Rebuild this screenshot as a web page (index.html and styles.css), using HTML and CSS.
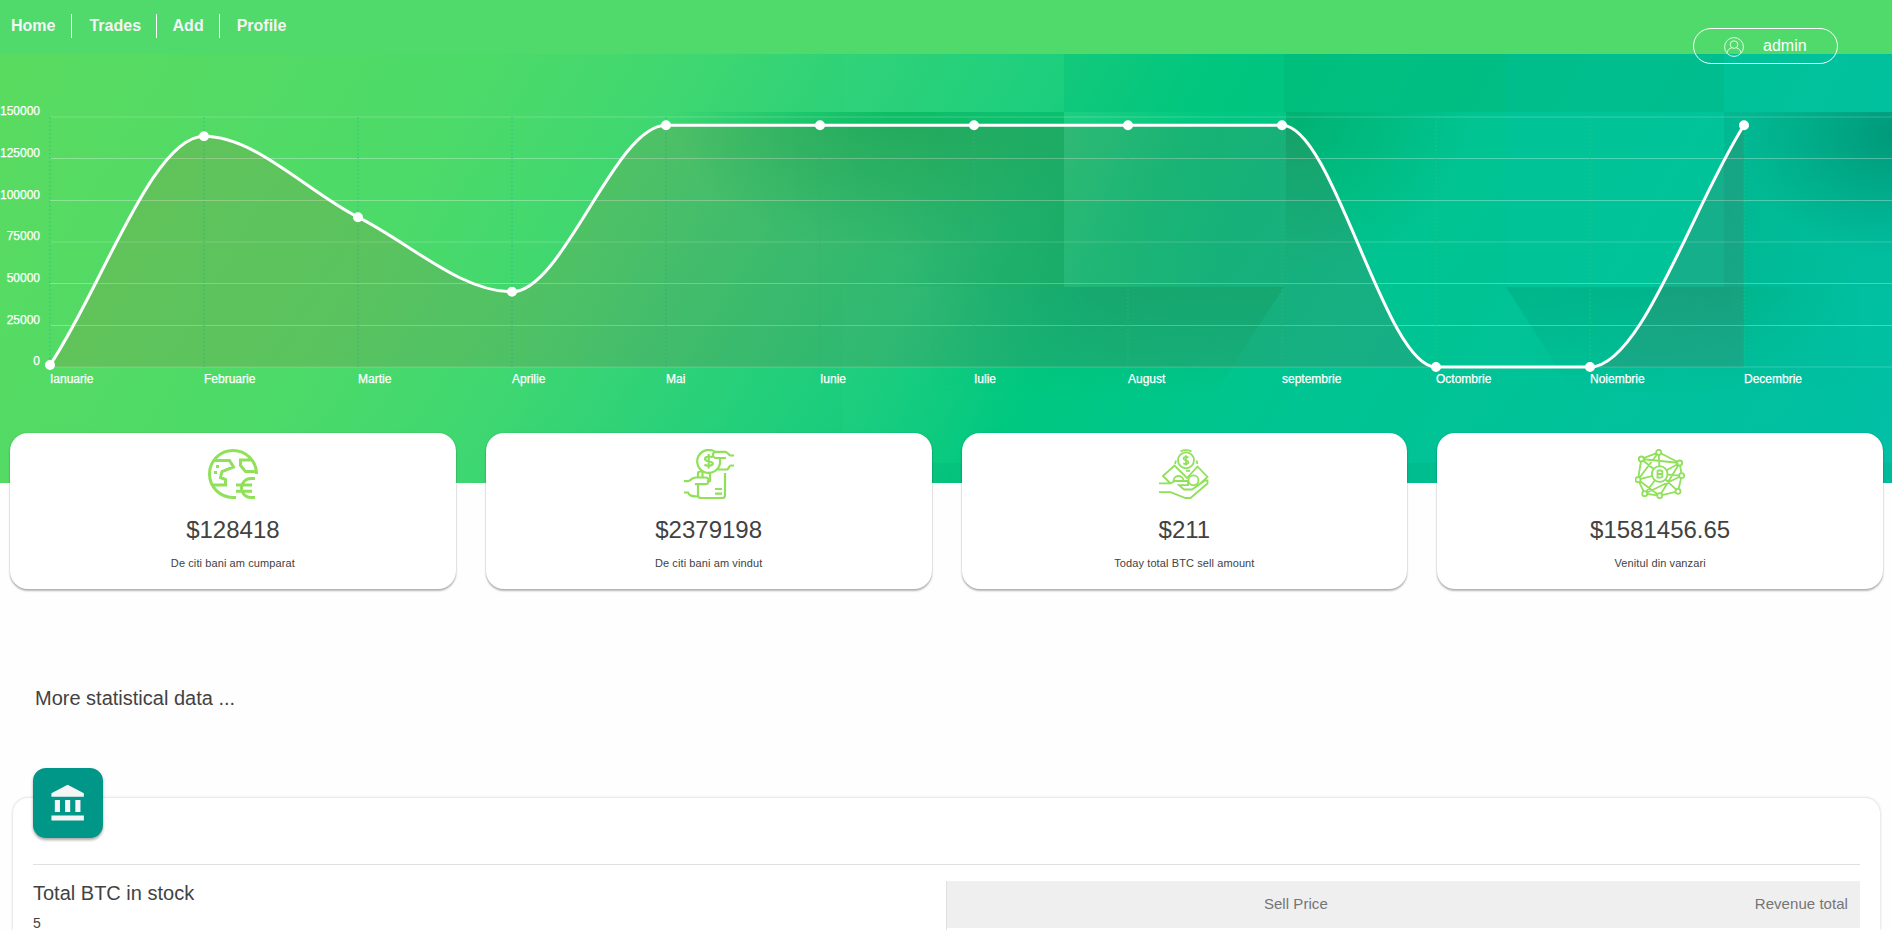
FILE: index.html
```html
<!DOCTYPE html>
<html lang="ro">
<head>
<meta charset="utf-8">
<title>Dashboard</title>
<link rel="stylesheet" href="styles.css">
</head>
<body>
<header class="topbar">
  <nav class="nav">
    <a class="nav-link">Home</a>
    <a class="nav-link">Trades</a>
    <a class="nav-link">Add</a>
    <a class="nav-link">Profile</a>
  </nav>
  <div class="user">
    <svg class="user-icon" viewBox="0 0 20 20"><circle cx="10" cy="10" r="9.400"/><circle cx="10" cy="7.600" r="3.800"/><path d="M3 16.200c.3-3 2-4.700 4.700-5.300M17 16.200c-.3-3-2-4.700-4.700-5.300"/></svg>
    <span>admin</span>
  </div>
</header>

<section class="hero">
  <svg class="hero-art" viewBox="0 54 1892 429">
    <defs>
      <linearGradient id="base" gradientUnits="userSpaceOnUse" x1="0" y1="54" x2="1617.600" y2="1024.600">
        <stop offset="0" stop-color="#5adb60"/><stop offset=".227" stop-color="#4cda69"/>
        <stop offset=".318" stop-color="#3fd771"/><stop offset=".383" stop-color="#30d277"/>
        <stop offset=".488" stop-color="#18cc7d"/><stop offset=".56" stop-color="#00c880"/>
        <stop offset=".682" stop-color="#00c491"/><stop offset=".864" stop-color="#00c19d"/>
        <stop offset="1" stop-color="#00bfa8"/>
      </linearGradient>
      <radialGradient id="shadeA" gradientUnits="userSpaceOnUse" cx="0" cy="0" r="1" gradientTransform="translate(900 105) scale(230 150)">
        <stop offset="0" stop-color="#00b45a" stop-opacity=".7"/><stop offset=".45" stop-color="#00b45a" stop-opacity=".38"/><stop offset="1" stop-color="#00b45a" stop-opacity="0"/>
      </radialGradient>
      <linearGradient id="shadeB" x1="0" x2="1" y1="0" y2="0">
        <stop offset="0" stop-color="#00b868" stop-opacity="0"/><stop offset="1" stop-color="#00b868" stop-opacity=".5"/>
      </linearGradient>
      <linearGradient id="lightA" x1="0" x2="1" y1="0" y2="0">
        <stop offset="0" stop-color="#40da90" stop-opacity=".2"/><stop offset="1" stop-color="#40da90" stop-opacity="0"/>
      </linearGradient>
      <linearGradient id="lightB" x1="0" x2="1" y1="0" y2="0">
        <stop offset="0" stop-color="#40da90" stop-opacity=".1"/><stop offset="1" stop-color="#40da90" stop-opacity="0"/>
      </linearGradient>
      <linearGradient id="low" gradientUnits="userSpaceOnUse" x1="930" y1="300" x2="1130" y2="320">
        <stop offset="0" stop-color="#00b476" stop-opacity="0"/><stop offset="1" stop-color="#00b476" stop-opacity=".75"/>
      </linearGradient>
      <linearGradient id="fade" x1="0" x2="0" y1="0" y2="1"><stop offset="0" stop-color="#fff"/><stop offset="1" stop-color="#000"/></linearGradient>
      <mask id="down" maskUnits="userSpaceOnUse" x="900" y="287" width="992" height="105"><rect x="900" y="287" width="992" height="105" fill="url(#fade)"/></mask>
      <radialGradient id="shadeC" gradientUnits="userSpaceOnUse" cx="0" cy="0" r="1" gradientTransform="translate(1290 112) scale(180 160)">
        <stop offset="0" stop-color="#00ae70" stop-opacity=".85"/><stop offset="1" stop-color="#00ae70" stop-opacity="0"/>
      </radialGradient>
      <linearGradient id="shadeD" x1="0" x2="1" y1="0" y2=".35">
        <stop offset="0" stop-color="#00a884" stop-opacity=".4"/><stop offset="1" stop-color="#00a884" stop-opacity=".1"/>
      </linearGradient>
      <radialGradient id="shadeE" gradientUnits="userSpaceOnUse" cx="0" cy="0" r="1" gradientTransform="translate(1892 135) scale(150 120)">
        <stop offset="0" stop-color="#009878" stop-opacity=".95"/><stop offset="1" stop-color="#009878" stop-opacity="0"/>
      </radialGradient>
      <linearGradient id="tri" gradientUnits="userSpaceOnUse" x1="1506" y1="0" x2="1860" y2="0">
        <stop offset="0" stop-color="#00ac82" stop-opacity=".6"/><stop offset=".62" stop-color="#00ac82" stop-opacity=".65"/><stop offset="1" stop-color="#00ac82" stop-opacity="0"/>
      </linearGradient>
    </defs>
    <rect y="54" width="1892" height="429" fill="url(#base)"/>
    <rect x="843" y="54" width="221" height="58" fill="#40da80" fill-opacity=".12"/>
    <rect x="1064" y="54" width="220" height="58" fill="#00c078" fill-opacity=".22"/>
    <rect x="1284" y="54" width="222" height="58" fill="#00b876" fill-opacity=".5"/>
    <rect x="1506" y="54" width="218" height="58" fill="#00b886" fill-opacity=".45"/>
    <rect x="620" y="112" width="444" height="150" fill="url(#shadeA)"/>
    <rect x="900" y="112" width="164" height="175" fill="url(#shadeB)"/>
    <rect x="1064" y="112" width="160" height="175" fill="url(#lightA)"/>
    <rect x="843" y="287" width="160" height="196" fill="url(#lightB)"/>
    <path d="M930 287H1284L1216 392H930Z" fill="url(#low)" mask="url(#down)"/>
    <rect x="1286" y="112" width="220" height="170" fill="url(#shadeC)"/>
    <rect x="1506" y="112" width="218" height="175" fill="#00c49a" fill-opacity=".55"/>
    <rect x="1724" y="112" width="168" height="175" fill="url(#shadeD)"/>
    <rect x="1724" y="112" width="168" height="150" fill="url(#shadeE)"/>
    <path d="M1506 287H1892V392H1573Z" fill="url(#tri)" mask="url(#down)"/>
    <rect x="925" y="463" width="967" height="20" fill="#00a870" fill-opacity=".18"/>

    <path class="grid-h" d="M50 158.500H1892M50 200.500H1892M50 283.500H1892M50 325.500H1892"/>
    <path class="grid-h soft" d="M50 117H1892M50 242H1892M50 367H1892"/>
    <path class="grid-v" d="M50 117V367M204 117V367M358 117V367M512 117V367M666 117V367M820 117V367M974 117V367M1128 117V367M1282 117V367M1436 117V367M1590 117V367M1744 117V367"/>
    <path class="area" d="M50 367V365C101.300 288.700 152.700 136.300 204 136.300C255.300 136.300 306.700 191.100 358 217.200C409.300 242.900 460.700 291.800 512 291.800C563.300 291.800 614.700 125.300 666 125.300H1282C1333.300 125.300 1384.700 367 1436 367H1590C1641.300 367 1692.700 205.700 1744 125.300V367Z"/>
    <path class="line" d="M50 365C101.300 288.700 152.700 136.300 204 136.300C255.300 136.300 306.700 191.100 358 217.200C409.300 242.900 460.700 291.800 512 291.800C563.300 291.800 614.700 125.300 666 125.300H1282C1333.300 125.300 1384.700 367 1436 367H1590C1641.300 367 1692.700 205.700 1744 125.300"/>
    <path class="points" d="M50 365h0M204 136.300h0M358 217.200h0M512 291.800h0M666 125.300h0M820 125.300h0M974 125.300h0M1128 125.300h0M1282 125.300h0M1436 367h0M1590 367h0M1744 125.300h0"/>
    <g class="labels labels-y">
      <text x="40" y="115">150000</text><text x="40" y="157">125000</text><text x="40" y="199">100000</text><text x="40" y="240">75000</text><text x="40" y="282">50000</text><text x="40" y="324">25000</text><text x="40" y="365">0</text>
    </g>
    <g class="labels">
      <text x="50" y="382.500">Ianuarie</text><text x="204" y="382.500">Februarie</text><text x="358" y="382.500">Martie</text><text x="512" y="382.500">Aprilie</text><text x="666" y="382.500">Mai</text><text x="820" y="382.500">Iunie</text><text x="974" y="382.500">Iulie</text><text x="1128" y="382.500">August</text><text x="1282" y="382.500">septembrie</text><text x="1436" y="382.500">Octombrie</text><text x="1590" y="382.500">Noiembrie</text><text x="1744" y="382.500">Decembrie</text>
    </g>
  </svg>
</section>

<section class="cards">
  <article class="card">
    <svg class="card-icon thick" viewBox="0 0 50 50"><path d="M48.500 25A23.500 23.500 0 1 0 25 48.500H28M5.500 11.500H21.500L25.500 18 14 22.500 12.500 28.500 17.500 30.500V36H5M44 11H32.500V16.500L37.500 22.500H48.500M47 29.500H43A9.500 9.500 0 0 0 43 48.500H47M28 36H44M28 42.200H44M8 17.500h3M6 23.500h3"/></svg>
    <p class="value">$128418</p>
    <p class="caption">De citi bani am cumparat</p>
  </article>
  <article class="card">
    <svg class="card-icon" viewBox="0 0 50 50"><path d="M32 3.500A11.500 11.500 0 1 0 36 14.500V9H32A3.100 3.100 0 0 1 32 2.800H41.500C44 3 44.500 6.500 47 6.500H50M36 9H42M34 20.500H43C45 19.500 45 16.500 47 16.500H50M28.800 8.500C27.500 7 21 7 21 10S28.800 12 28.800 14.500 22 17.500 20.500 15.500M24.700 5V19.500M0 32.200H4C7 32 7 28.500 12 28.500H21.500A3.200 3.200 0 0 1 21.500 35.200H11M0 43.500H4C5.500 46.500 7 47.500 13.500 47.500M14 36V46Q14 49 17 49H38.500Q41 49 41 46V24M14 28V24Q14 22.500 16.500 22.500H20M18.500 23V28.500M26 23.500V32H23M31 40H38M31 44.700H38"/></svg>
    <p class="value">$2379198</p>
    <p class="caption">De citi bani am vindut</p>
  </article>
  <article class="card">
    <svg class="card-icon light" viewBox="0 0 50 50"><circle cx="27" cy="11.300" r="8"/><circle cx="34.500" cy="31.300" r="5"/><path d="M21.500 2.300Q27 0 32.500 2.300M29.500 8.500C28 7.500 24.500 7.500 24.500 9.500S29.500 11.300 29.500 13.300 26 15.500 24.300 14.200M27 6.200V16.500M17 11.500 16 15M37.500 11.500 38.500 15M27 21.800H31M11 34 4 27 15.500 16.500 28 29 38.500 17.500 48.500 28 38 37.500M14.500 32A5 5 0 0 1 24.500 32M0 34.300H11.500L16 32H29V36.200H20L25 40.500H33L46 31.500H48.500V34.500L31.500 49H26.500L11.500 43.200H0"/></svg>
    <p class="value">$211</p>
    <p class="caption">Today total BTC sell amount</p>
  </article>
  <article class="card">
    <svg class="card-icon light" viewBox="0 0 50 50"><path d="M23.700 3.300 6.300 10 3 30.700 9.700 44.700 24.700 46.700 43 42.300 46.700 26.700 44.700 14ZM6.300 10 44.700 14M6.300 10 24.700 25M23.700 3.300 24.700 25M23.700 3.300 3 30.700M44.700 14 24.700 25M46.700 26.700 24.700 25M3 30.700 24.700 25M43 42.300 24.700 25M9.700 44.700 24.700 25M46.700 26.700 9.700 44.700M44.700 14 24.700 46.700M3 30.700 24.700 46.700"/><g class="nodes"><circle cx="23.700" cy="3.300" r="2.500"/><circle cx="6.300" cy="10" r="2.500"/><circle cx="44.700" cy="14" r="2.500"/><circle cx="46.700" cy="26.700" r="2.500"/><circle cx="43" cy="42.300" r="2.500"/><circle cx="24.700" cy="46.700" r="2.500"/><circle cx="9.700" cy="44.700" r="2.500"/><circle cx="3" cy="30.700" r="2.500"/><circle cx="24.700" cy="25" r="7.800"/></g><path d="M22.500 21.500H25.500Q27.500 21.500 27.500 23.200T25.500 25H22.500V21.500M22.500 25H25.500Q27.500 25 27.500 26.800T25.500 28.600H22.500V25"/></svg>
    <p class="value">$1581456.65</p>
    <p class="caption">Venitul din vanzari</p>
  </article>
</section>

<h2 class="section-title">More statistical data ...</h2>

<section class="panel">
  <div class="badge"><svg class="badge-icon" viewBox="0 0 24 24"><path d="M4 10v7h3v-7H4zm6 0v7h3v-7h-3zM2 22h19v-3H2v3zm14-12v7h3v-7h-3zm-4.500-9L2 6v2h19V6l-9.500-5z"/></svg></div>
  <div class="panel-body">
    <div class="stock">
      <h3 class="stock-title">Total BTC in stock</h3>
      <p class="stock-value">5</p>
    </div>
    <div class="prices">
      <div class="prices-head"><span>Sell Price</span><span>Revenue total</span></div>
    </div>
  </div>
</section>
</body>
</html>
```
FILE: styles.css
```css
* { box-sizing: border-box; }
body {
  margin: 0;
  height: 930px;
  overflow: hidden;
  background: #fefefe;
  color: #424242;
  font-family: "Liberation Sans", Arial, sans-serif;
}
p, h2, h3 { margin: 0; font-weight: 400; }

.topbar {
  position: relative;
  z-index: 1;
  display: flex;
  justify-content: space-between;
  height: 54px;
  padding: 14px 54px 0 10px;
  background: #50da6b;
}
.nav { display: flex; height: 24px; }
.nav-link {
  padding: 0 15.500px;
  border-right: 1px solid #fff;
  color: #f5f5f5;
  font-size: 16px;
  font-weight: 700;
  line-height: 23px;
}
.nav-link:first-child { padding-left: 1px; }
.nav-link:nth-child(2) { padding: 0 15px 0 17.500px; }
.nav-link:last-child { padding-left: 16.500px; border: 0; }
.user {
  display: flex;
  align-items: center;
  gap: 19px;
  width: 145px;
  height: 36px;
  margin-top: 14px;
  padding-left: 30px;
  border: 1px solid #fff;
  border-radius: 18px;
  color: #fff;
  font-size: 16px;
  line-height: 34px;
}
.user-icon { width: 20px; height: 20px; margin-top: 2px; fill: none; stroke: #fff; stroke-width: 1; opacity: .85; }

.hero { height: 429px; }
.hero-art { display: block; width: 1892px; height: 429px; }
.grid-h { fill: none; stroke: rgba(255, 255, 255, .3); stroke-width: 1; }
.soft { stroke: rgba(255, 255, 255, .1); stroke-width: 2; }
.grid-v { fill: none; stroke: #26c281; stroke-opacity: .4; stroke-width: 2; stroke-dasharray: 2 2; }
.area { fill: #d70206; fill-opacity: .1; }
.line { fill: none; stroke: #fff; stroke-width: 3; }
.points { stroke: #fff; stroke-width: 10; stroke-linecap: round; }
.labels { fill: #fff; stroke: #fff; stroke-width: .25; font-size: 12px; }
.labels-y { text-anchor: end; }

.cards {
  position: relative;
  display: grid;
  grid-template-columns: repeat(4, 1fr);
  gap: 30px;
  margin-top: -50px;
  padding: 0 9px 0 10px;
}
.card {
  display: flex;
  flex-direction: column;
  align-items: center;
  height: 156px;
  padding-top: 16px;
  border-radius: 18px;
  background: #fff;
  box-shadow: 0 2px 2px rgba(0, 0, 0, .28), 0 0 2px rgba(0, 0, 0, .14);
}
.card-icon { width: 50px; height: 50px; fill: none; stroke: #90e05a; stroke-width: 2.200; }
.thick { stroke-width: 3; }
.light { stroke-width: 1.800; }
.nodes { fill: #fff; }
.value { margin-top: 16px; font-size: 24px; line-height: 30px; }
.caption { margin-top: 11px; font-size: 11px; letter-spacing: .1px; line-height: 14px; }

.section-title { margin: 97px 0 0 35px; font-size: 20px; line-height: 24px; }

.panel {
  height: 132px;
  margin: 88px 12px 0 13px;
  padding: 0 20px;
  border-radius: 15px 15px 0 0;
  background: #fff;
  box-shadow: 0 0 3px rgba(0, 0, 0, .22);
}
.badge {
  position: relative;
  top: -30px;
  display: grid;
  place-items: center;
  width: 70px;
  height: 70px;
  border-radius: 13px;
  background: #009688;
  box-shadow: 0 2px 3px rgba(0, 0, 0, .35);
}
.badge-icon { width: 41px; height: 41px; fill: #f5f5f5; }
.panel-body {
  display: grid;
  grid-template-columns: 1fr 914px;
  margin-top: -4px;
  padding-top: 16px;
  border-top: 1px solid #e0e0e0;
}
.stock-title { font-size: 20px; line-height: 24px; }
.stock-value { margin-top: 9px; font-size: 14px; line-height: 18px; }
.prices { height: 49px; border-left: 1px solid #e0e0e0; }
.prices-head {
  display: flex;
  justify-content: flex-end;
  gap: 427px;
  height: 47px;
  padding-right: 12px;
  background: #efefef;
  color: #757575;
  font-size: 15px;
  letter-spacing: .05px;
  line-height: 46px;
}
```
